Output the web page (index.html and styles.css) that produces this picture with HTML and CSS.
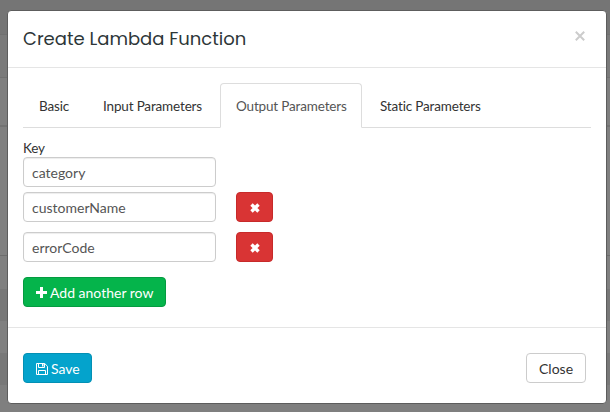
FILE: index.html
```html
<!DOCTYPE html>
<html lang="en">
<head>
<meta charset="utf-8">
<title>Create Lambda Function</title>
<link rel="stylesheet" href="styles.css">
</head>
<body>
<div class="modal">
  <header class="modal-header">
    <h1 class="title">Create Lambda Function</h1>
    <button class="dismiss" aria-label="Dismiss"><svg width="10" height="10" viewBox="0 0 10 10"><path d="M.8.8l8.400 8.400M9.200.8L.8 9.200" stroke="#ccc" stroke-width="2" fill="none"/></svg></button>
  </header>
  <main class="modal-body">
    <nav class="tabs">
      <a class="tab basic">Basic</a>
      <a class="tab input-tab">Input Parameters</a>
      <a class="tab output-tab active">Output Parameters</a>
      <a class="tab static-tab">Static Parameters</a>
    </nav>
    <label class="label" for="key">Key</label>
    <div class="row first"><input class="field" id="key" value="category"></div>
    <div class="row">
      <input class="field" value="customerName">
      <button class="btn danger" aria-label="Remove"><svg width="10" height="10" viewBox="0 0 10 10"><path d="M1.500 1.500l7 7M8.500 1.500l-7 7" stroke="#fff" stroke-width="3.400" fill="none"/></svg></button>
    </div>
    <div class="row">
      <input class="field" value="errorCode">
      <button class="btn danger" aria-label="Remove"><svg width="10" height="10" viewBox="0 0 10 10"><path d="M1.500 1.500l7 7M8.500 1.500l-7 7" stroke="#fff" stroke-width="3.400" fill="none"/></svg></button>
    </div>
    <button class="btn success"><svg class="plus" width="11" height="11" viewBox="0 0 11 11"><path d="M5.500 0v11M0 5.500h11" stroke="#fff" stroke-width="3" fill="none"/></svg><span>Add another row</span></button>
  </main>
  <footer class="modal-footer">
    <button class="btn primary"><svg class="disk" width="12" height="12" viewBox="0 0 12 12" fill="none" stroke="#fff"><path d="M.5.5h8.200l2.800 2.800v8.200H.5z"/><path d="M2.500.5v4h6v-4M2.500 11.500v-4h7v4"/><path d="M6 1h1.500v2.500H6z" fill="#fff" stroke="none"/></svg><span>Save</span></button>
    <button class="btn close">Close</button>
  </footer>
</div>
</body>
</html>
```
FILE: styles.css
```css
* { box-sizing: border-box; }
body {
  margin: 0;
  height: 412px;
  overflow: hidden;
  padding: 10px 3px 0 7px;
  font: 14px/20px Lato, sans-serif;
  color: #333;
  background: linear-gradient(#757575 0 34px, #707070 34px 35px, #7a7a7a 35px 77px, #717171 77px 78px, #7f7f7f 78px 125px, #737373 125px 127px, #808080 127px 255px, #6d6d6d 255px 256px, #808080 256px 289px, #787878 289px 321px, #808080 321px 353px, #787878 353px 385px, #7f7f7f 385px);
}
.modal {
  width: 600px;
  height: 394px;
  background: #fff;
  border: 1px solid #5d5d5d;
  border-radius: 4px;
}
.modal-header {
  height: 57px;
  padding: 16px 21px 0 15px;
  border-bottom: 1px solid #e5e5e5;
  display: flex;
  justify-content: space-between;
}
.title {
  margin: 0;
  font: 400 18px/24px Poppins, Inter, sans-serif;
  color: #2d3638;
}
.dismiss { padding: 4px 0 0; height: 14px; border: 0; background: none; display: flex; }
.modal-body { height: 259px; padding: 15px; }
.tabs {
  display: flex;
  height: 45px;
  border-bottom: 1px solid #ddd;
  font-size: 13.5px;
  letter-spacing: -.16px;
  color: #333;
}
.tab {
  height: 45px;
  padding: 12px 0 0 15px;
  border: 1px solid transparent;
  border-radius: 4px 4px 0 0;
  white-space: nowrap;
}
.basic { width: 64px; }
.input-tab { width: 133px; }
.output-tab { width: 142px; }
.static-tab { width: 133px; margin-left: 2px; }
.active { color: #555; background: #fff; border-color: #ddd; border-bottom-color: #fff; }
.label { display: block; height: 20px; margin-top: 10px; font-size: 13.5px; letter-spacing: -.16px; }
.row { display: flex; gap: 20px; margin-bottom: 10px; }
.first { margin: -1px 0 5px; }
.field {
  width: 193px;
  height: 30px;
  padding: 0 8px;
  border: 1px solid #ccc;
  border-radius: 4px;
  box-shadow: inset 0 1px 1px rgba(0, 0, 0, .075);
  font: 14px/20px Lato, sans-serif;
  color: #555;
  background: #fff;
}
.btn {
  height: 30px;
  padding: 2px 12px 0;
  border: 1px solid;
  border-radius: 4px;
  font: 14px/20px Lato, sans-serif;
  color: #fff;
  display: flex;
  align-items: center;
  white-space: nowrap;
}
.danger { width: 37px; justify-content: center; background: #d93434; border-color: #c72a2a; padding: 2px 0 0; }
.success { width: 143px; margin-top: 15px; gap: 3px; background: #05b44b; border-color: #049b40; }
.plus, .disk { flex: none; margin-top: -1px; }
.modal-footer { border-top: 1px solid #e5e5e5; padding: 25px 20px 0 15px; display: flex; justify-content: space-between; }
.primary { width: 69px; gap: 3px; background: #04a3cc; border-color: #0390b4; }
.close { width: 60px; color: #333; background: #fff; border-color: #ccc; }
```
